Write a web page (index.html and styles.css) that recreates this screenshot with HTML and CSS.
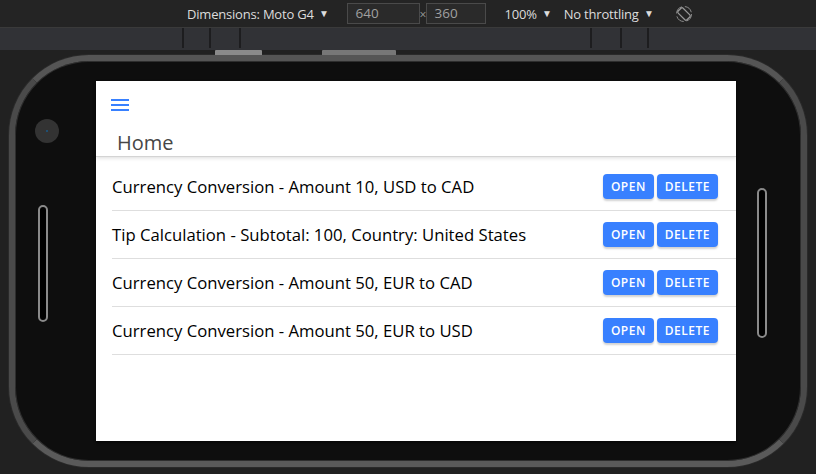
FILE: index.html
```html
<!DOCTYPE html>
<html>
<head>
<meta charset="utf-8">
<link rel="stylesheet" href="styles.css">
</head>
<body>
<div class="toolbar">
  <span class="tb-label">Dimensions: Moto G4 <span class="caret">▼</span></span>
  <span class="tb-input">640</span>
  <span class="tb-times">×</span>
  <span class="tb-input">360</span>
  <span class="tb-label tb-zoom">100% <span class="caret">▼</span></span>
  <span class="tb-label tb-throttle">No throttling <span class="caret">▼</span></span>
  <svg class="tb-rotate" width="18" height="18" viewBox="0 0 18 18">
    <circle cx="9" cy="9" r="7.5" fill="none" stroke="#8a8a8a" stroke-width="1" stroke-dasharray="9 3"/>
    <rect x="5.5" y="2.8" width="7" height="12.4" rx="1.5" transform="rotate(-45 9 9)" fill="none" stroke="#9a9a9a" stroke-width="1.2"/>
  </svg>
</div>
<div class="ruler">
  <i class="tick t1"></i><i class="tick t2"></i><i class="tick t3"></i><i class="tick t4"></i><i class="tick t5"></i><i class="tick t6"></i>
</div>
<div class="stage">
  <div class="phone">
    <span class="hw-btn hw-power"></span>
    <span class="hw-btn hw-vol"></span>
    <span class="camera"><span class="lens"></span></span>
    <span class="speaker speaker-left"></span>
    <span class="speaker speaker-right"></span>
    <div class="screen">
      <div class="header">
        <div class="menu-btn" aria-label="menu">
          <span></span><span></span><span></span>
        </div>
        <div class="title">Home</div>
      </div>
      <div class="list">
        <div class="item">
          <span class="label">Currency Conversion - Amount 10, USD to CAD</span>
          <span class="actions"><button class="btn">Open</button><button class="btn">Delete</button></span>
        </div>
        <div class="item">
          <span class="label">Tip Calculation - Subtotal: 100, Country: United States</span>
          <span class="actions"><button class="btn">Open</button><button class="btn">Delete</button></span>
        </div>
        <div class="item">
          <span class="label">Currency Conversion - Amount 50, EUR to CAD</span>
          <span class="actions"><button class="btn">Open</button><button class="btn">Delete</button></span>
        </div>
        <div class="item">
          <span class="label">Currency Conversion - Amount 50, EUR to USD</span>
          <span class="actions"><button class="btn">Open</button><button class="btn">Delete</button></span>
        </div>
      </div>
    </div>
  </div>
</div>
</body>
</html>
```
FILE: styles.css
```css
html, body {
  margin: 0;
  padding: 0;
}
body {
  width: 816px;
  height: 474px;
  overflow: hidden;
  background: #212121;
  font-family: "Open Sans", "Noto Sans", sans-serif;
}
.toolbar {
  height: 28px;
  box-sizing: border-box;
  border-bottom: 1px solid #3a3a3a;
  background: #242424;
  display: flex;
  align-items: center;
  padding-left: 187px;
  color: #dcdcdc;
  font-size: 13px;
}
.tb-label {
  white-space: nowrap;
  letter-spacing: -0.2px;
}
.caret {
  font-size: 10px;
  position: relative;
  top: -2px;
  margin-left: 2px;
}
.tb-input {
  margin-left: 18px;
  width: 73px;
  height: 21px;
  box-sizing: border-box;
  border: 1px solid #4a4a4a;
  background: #2a2a2a;
  color: #a0a0a0;
  font-size: 13.5px;
  padding-left: 8px;
  line-height: 19px;
}
.tb-times {
  color: #9a9a9a;
  font-size: 12px;
  width: 6px;
  margin: 2px 0 0 0;
}
.tb-times + .tb-input {
  width: 60px;
  margin-left: 0;
}
.tb-zoom {
  margin-left: 19px;
}
.tb-throttle {
  margin-left: 12px;
}
.tb-rotate {
  margin-left: 21px;
}
.ruler {
  height: 20px;
  background: #313236;
  display: flex;
  align-items: stretch;
  padding-bottom: 2px;
}
.tick {
  width: 2px;
  background: #1d1d1f;
}
.t1 { margin-left: 182px; }
.t2 { margin-left: 25px; }
.t3 { margin-left: 28px; }
.t4 { margin-left: 349px; }
.t5 { margin-left: 28px; }
.t6 { margin-left: 25px; }
.stage {
  padding: 5px 0 0 9px;
}
.phone {
  position: relative;
  width: 798px;
  height: 412px;
  box-sizing: border-box;
  border: 6px solid #4a4a4a;
  border-top-color: #555;
  border-bottom-color: #5a5a5a;
  border-radius: 80px;
  background: #0e0e0e;
  box-shadow: inset 0 0 0 1px #2e2e2e, 0 0 0 1px #2a2a2a;
  padding: 20px 0 0 81px;
}
.hw-btn {
  position: absolute;
  top: -11px;
  height: 5px;
  background: #8a8a8a;
  border-radius: 1px 1px 0 0;
}
.hw-power { left: 200px; width: 47px; }
.hw-vol { left: 307px; width: 74px; background: #777; }
.camera {
  position: absolute;
  left: 20px;
  top: 58px;
  width: 24px;
  height: 24px;
  border-radius: 50%;
  background: #333;
  display: flex;
  align-items: center;
  justify-content: center;
}
.lens {
  width: 2px;
  height: 2px;
  background: #1a5a8a;
  border-radius: 50%;
}
.speaker {
  position: absolute;
  width: 6px;
  border: 2px solid #8a8a8a;
  border-radius: 6px;
  background: #000;
}
.speaker-left { left: 23px; top: 144px; height: 113px; }
.speaker-right { left: 742px; top: 127px; height: 146px; }
.screen {
  width: 640px;
  height: 360px;
  background: #fff;
  display: flex;
  flex-direction: column;
  box-shadow: 0 2px 2px rgba(0,0,0,0.5);
}
.header {
  height: 75px;
  box-sizing: border-box;
  position: relative;
  z-index: 1;
  box-shadow: 0 1px 0 #d4d4d4, 0 2px 4px rgba(0,0,0,0.14);
  padding: 18px 0 0 15px;
}
.menu-btn {
  width: 18px;
  display: flex;
  flex-direction: column;
  gap: 3px;
}
.menu-btn span {
  height: 2px;
  background: #3880ff;
}
.title {
  margin: 20px 0 0 6px;
  font-size: 20px;
  line-height: 24px;
  color: #464646;
  font-family: "Open Sans", sans-serif;
}
.list {
  padding-top: 7px;
}
.item {
  margin-left: 16px;
  height: 48px;
  box-sizing: border-box;
  border-bottom: 1px solid #dedede;
  display: flex;
  align-items: center;
  justify-content: space-between;
  padding-right: 18px;
}
.label {
  font-size: 16.7px;
  color: #000;
  white-space: nowrap;
}
.actions {
  display: flex;
  gap: 3px;
}
.btn {
  height: 25px;
  padding: 0 8px;
  border: none;
  border-radius: 4px;
  background: #3880ff;
  color: #fff;
  font-family: "Open Sans", sans-serif;
  font-size: 12px;
  font-weight: 600;
  letter-spacing: 0.5px;
  text-transform: uppercase;
  box-shadow: 0 2px 2px rgba(0,0,0,0.18);
}
```
